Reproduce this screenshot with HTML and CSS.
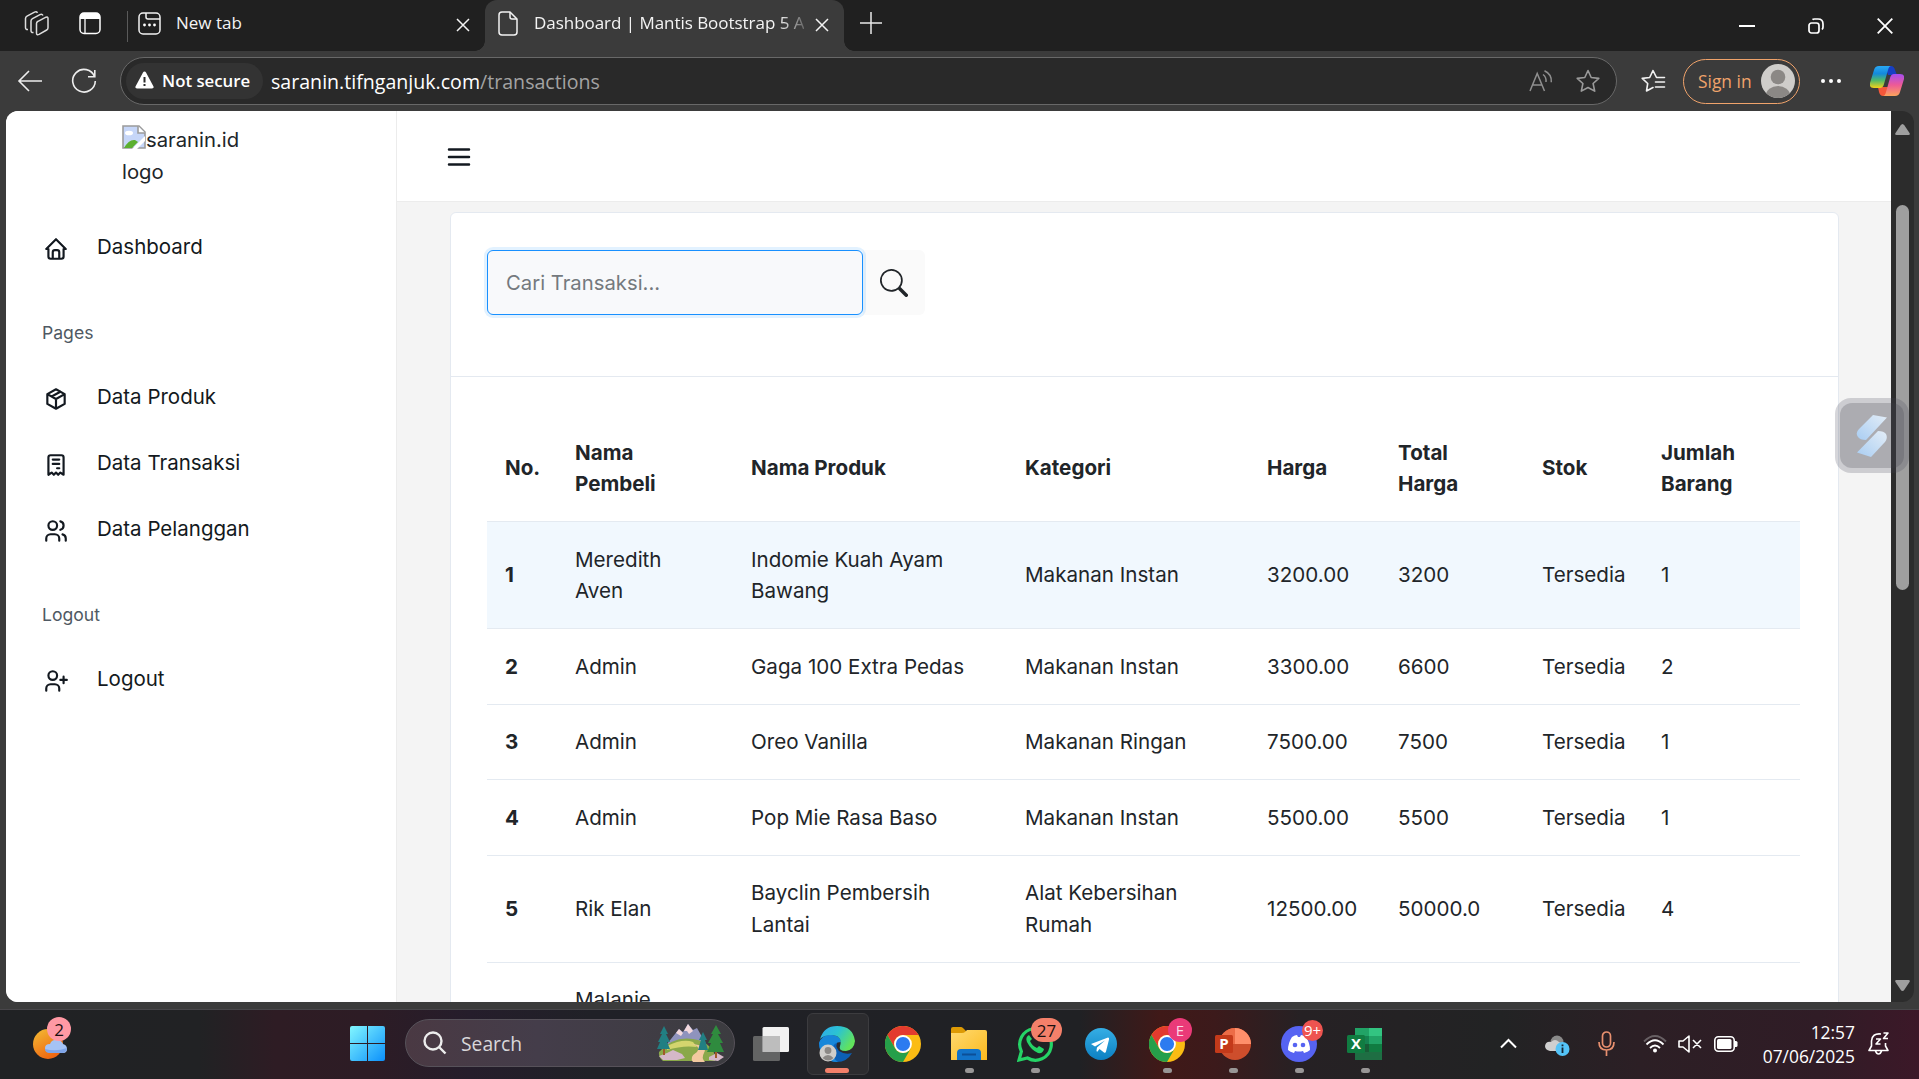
FILE: index.html
```
<!DOCTYPE html>
<html lang="id">
<head>
<meta charset="utf-8">
<title>Dashboard | Mantis Bootstrap 5</title>
<link rel="stylesheet" href="styles.css">
</head>
<body>
<svg width="0" height="0" class="defs" aria-hidden="true">
  <defs>
    <symbol id="chrome" viewBox="0 0 36 36">
      <circle cx="18" cy="18" r="18" fill="#fbbc13"/>
      <path d="M2.4 9A18 18 0 0 1 33.6 9H18a9 9 0 0 0-7.8 13.5z" fill="#e33b2e"/>
      <path d="M2.4 9A18 18 0 0 0 18 36l7.8-13.5a9 9 0 0 1-15.6 0z" fill="#269f4a"/>
      <circle cx="18" cy="18" r="8.9" fill="#fff"/>
      <circle cx="18" cy="18" r="7.1" fill="#2c7bf0"/>
    </symbol>
    <symbol id="close" viewBox="0 0 14 14"><path d="M1 1l12 12M13 1L1 13" fill="none" stroke="currentColor" stroke-width="1.5"/></symbol>
  </defs>
</svg>
<div class="screen">
  <header class="tabs">
    <div class="tabs-tools">
      <svg width="26" height="26" viewBox="0 0 26 26" fill="none" stroke="#ddd" stroke-width="1.5" stroke-linejoin="round"><path d="M12.500 12.500q0-1.500 1.500-2.200l8-4.100q2-.9 2 1.200v9.400q0 1.500-1.300 2.200l-7.700 4.400q-2.500 1.200-2.500-1.400z"/><path d="M9.500 21.500q-2.500.5-2.500-2V10q0-1.500 1.500-2.300l7.500-4q2-1 3 .8"/><path d="M4 18.500q-2.500.3-2.500-2V7.500Q1.500 6 3 5.200l7.500-4q2-1 3 .6"/></svg>
      <svg width="22" height="23" viewBox="0 0 22 23"><rect x="1" y="1" width="20" height="20.500" rx="4" fill="none" stroke="#fff" stroke-width="1.500"/><path d="M1 7V5q0-4 4-4h12q4 0 4 4v2z" fill="#fff"/><path d="M6 7v14" stroke="#fff" stroke-width="1.300"/></svg>
    </div>
    <div class="tab">
      <svg width="23" height="23" viewBox="0 0 23 23" fill="none" stroke="#f2f2f2" stroke-width="1.500"><rect x="1" y="1" width="21" height="21" rx="4"/><path d="M8 1v4q0 2 2 2h12"/><g fill="#fff" stroke="none"><circle cx="6.500" cy="13" r="1.400"/><circle cx="11.500" cy="13" r="1.400"/><circle cx="16.500" cy="13" r="1.400"/></g></svg>
      <span class="tab-title">New tab</span>
      <svg class="tab-close" width="14" height="14"><use href="#close"/></svg>
    </div>
    <div class="tab tab-active">
      <svg width="20" height="25" viewBox="0 0 20 25" fill="none" stroke="#f2f2f2" stroke-width="1.500" stroke-linejoin="round"><path d="M4 1h8l7 7v13q0 3-3 3H4q-3 0-3-3V4q0-3 3-3z"/><path d="M12 1v5q0 2 2 2h5"/></svg>
      <span class="tab-title fade">Dashboard | Mantis Bootstrap 5 A</span>
      <svg class="tab-close" width="14" height="14"><use href="#close"/></svg>
    </div>
    <svg class="new-tab" width="22" height="22" viewBox="0 0 22 22"><path d="M11 0v22M0 11h22" stroke="#e8e8e8" stroke-width="1.500"/></svg>
    <div class="window-buttons">
      <svg width="16" height="16" viewBox="0 0 16 16"><path d="M0 8h16" stroke="#fff" stroke-width="2"/></svg>
      <svg width="16" height="16" viewBox="0 0 16 16" fill="none" stroke="#fff" stroke-width="1.700"><rect x="1" y="5" width="10" height="10" rx="2.500"/><path d="M4.500 1.600Q5 1 6.500 1H10q5 0 5 5v3q0 1.500-1 2.500"/></svg>
      <svg width="16" height="16" viewBox="0 0 16 16"><path d="M.7.7l14.600 14.600M15.300.7L.7 15.300" stroke="#fff" stroke-width="1.800"/></svg>
    </div>
  </header>

  <div class="toolbar">
    <svg class="nav-icon" width="26" height="22" viewBox="0 0 26 22" fill="none" stroke="#ededed" stroke-width="1.600"><path d="M25 11H2M12 1L2 11l10 10"/></svg>
    <svg class="nav-icon" width="26" height="26" viewBox="0 0 26 26" fill="none" stroke="#ededed" stroke-width="1.600"><path d="M23.500 8.500A11.300 11.300 0 1 0 24.300 13M23.800 2v6.700H17"/></svg>
    <div class="address">
      <span class="chip"><svg width="19" height="18" viewBox="0 0 19 18"><path d="M9.500.5q1 0 1.500 1l7.500 14q.7 2-1.500 2H2q-2.200 0-1.500-2L8 1.500q.5-1 1.500-1z" fill="#fff"/><path d="M9.500 6v5.500M9.500 13v2" stroke="#2b2b2b" stroke-width="2"/></svg>Not secure</span>
      <span class="url">saranin.tifnganjuk.com<span class="path">/transactions</span></span>
      <svg class="read" width="24" height="22" viewBox="0 0 24 22" fill="none" stroke="#8f8f8f" stroke-width="1.500"><path d="M1 21L8.200 3.500 15.500 21M3.500 15H13"/><path d="M14 4.500q3.500 2.500 3 7.500M15.500 .8q7.500 3.500 6.800 11.500"/></svg>
      <svg width="24" height="24" viewBox="0 0 24 24" fill="none" stroke="#9a9a9a" stroke-width="1.600" stroke-linejoin="round"><path d="M12 1.500l3.200 7 7.600.9-5.700 5.100 1.600 7.600L12 18.500l-6.700 3.600 1.600-7.600L1.200 9.400l7.600-.9z"/></svg>
    </div>
    <svg class="fav" width="25" height="24" viewBox="0 0 25 24" fill="none" stroke="#f2f2f2" stroke-width="1.600" stroke-linejoin="round" stroke-linecap="round"><path d="M23.500 8.500h-8L12 1.500l-3.300 7-7.500.9 5.500 5.100L5.500 22l6.500-3.500M14.500 13h9M14.500 18h9"/></svg>
    <div class="signin">Sign in<svg width="34" height="34" viewBox="0 0 34 34"><clipPath id="av"><circle cx="17" cy="17" r="17"/></clipPath><circle cx="17" cy="17" r="17" fill="#cfcdca"/><g clip-path="url(#av)" fill="#8b8885"><circle cx="17" cy="13" r="7.300"/><ellipse cx="17" cy="31" rx="12" ry="9"/></g></svg></div>
    <svg class="dots" width="22" height="6" viewBox="0 0 22 6" fill="#fff"><circle cx="3" cy="3" r="2"/><circle cx="11" cy="3" r="2"/><circle cx="19" cy="3" r="2"/></svg>
    <svg width="34" height="32" viewBox="0 0 34 32">
      <defs>
        <linearGradient id="cp1" x1="0" y1="0" x2="0" y2="1"><stop offset="0" stop-color="#2aa9f5"/><stop offset=".35" stop-color="#1389dc"/><stop offset=".65" stop-color="#4fb96a"/><stop offset="1" stop-color="#f4d218"/></linearGradient>
        <linearGradient id="cp2" x1="0" y1="0" x2="0" y2="1"><stop offset="0" stop-color="#a64df0"/><stop offset=".5" stop-color="#ee5a96"/><stop offset="1" stop-color="#fba45c"/></linearGradient>
      </defs>
      <path d="M15 1h6q3 0 4 4l2 5h-9z" fill="#173fc4"/>
      <path d="M19 31h-6q-3 0-4-4l-1-5h10z" fill="#f4573a"/>
      <path d="M9 1h12q-2 0-3 4l-4 14q-1 4-4 4H4q-5 0-4-5L4 5q1-4 5-4z" fill="url(#cp1)"/>
      <path d="M25 31H13q2 0 3-4l4-14q1-4 4-4h6q5 0 4 5l-4 13q-1 4-5 4z" fill="url(#cp2)"/>
    </svg>
  </div>

  <div class="viewport">
    <div class="page">
      <nav class="sidebar">
        <div class="logo"><svg width="24" height="24" viewBox="0 0 24 24"><path d="M1 1h16l6 6v16H1z" fill="#c6d6f8" stroke="#9b9b9b" stroke-width="1.600"/><ellipse cx="7" cy="8" rx="4" ry="2.300" fill="#fff"/><path d="M2 23q5-9 11-8l3 2-6 6z" fill="#5cb030"/><path d="M10 24L23 11v5l-8 8z" fill="#fff"/><path d="M16 1v7h7" fill="#fff" stroke="#9b9b9b" stroke-width="1.600"/></svg>saranin.id logo</div>
        <a class="item"><svg class="icon" viewBox="0 0 24 24"><path d="M5 12H3l9-9 9 9h-2M5 12v7a2 2 0 0 0 2 2h10a2 2 0 0 0 2-2v-7M9 21v-6a2 2 0 0 1 2-2h2a2 2 0 0 1 2 2v6"/></svg>Dashboard</a>
        <div class="caption">Pages</div>
        <a class="item"><svg class="icon" viewBox="0 0 24 24"><path d="M12 3l8 4.500v9L12 21l-8-4.500v-9zM12 12l8-4.500M12 12v9M12 12L4 7.500M16 5.250l-8 4.500"/></svg>Data Produk</a>
        <a class="item"><svg class="icon" viewBox="0 0 24 24"><path d="M5 21V5a2 2 0 0 1 2-2h10a2 2 0 0 1 2 2v16l-3-2-2 2-2-2-2 2-2-2-3 2M9 7h6M9 11h6M13 15h2"/></svg>Data Transaksi</a>
        <a class="item"><svg class="icon" viewBox="0 0 24 24"><circle cx="9" cy="7" r="4"/><path d="M3 21v-2a4 4 0 0 1 4-4h4a4 4 0 0 1 4 4v2M16 3.130a4 4 0 0 1 0 7.750M21 21v-2a4 4 0 0 0-3-3.850"/></svg>Data Pelanggan</a>
        <div class="caption">Logout</div>
        <a class="item"><svg class="icon" viewBox="0 0 24 24"><circle cx="9" cy="7" r="4"/><path d="M3 21v-2a4 4 0 0 1 4-4h4a4 4 0 0 1 4 4v2M16 11h6M19 8v6"/></svg>Logout</a>
      </nav>
      <main class="main">
        <div class="topbar"><svg width="24" height="20" viewBox="0 0 24 20"><path d="M2 2.500h20M2 10h20M2 17.500h20" stroke="#131920" stroke-width="2.500" stroke-linecap="round"/></svg></div>
        <section class="card">
          <div class="card-head">
            <div class="search-input">Cari Transaksi...</div>
            <button class="search-btn"><svg width="28" height="28" viewBox="0 0 16 16" fill="#212529"><path d="M11.742 10.344a6.500 6.500 0 1 0-1.397 1.398h-.001c.03.04.062.078.098.115l3.850 3.850a1 1 0 0 0 1.415-1.414l-3.850-3.850a1.007 1.007 0 0 0-.115-.1zM12 6.500a5.500 5.500 0 1 1-11 0 5.500 5.500 0 0 1 11 0z"/></svg></button>
          </div>
          <table class="table">
            <colgroup><col class="c1"><col class="c2"><col class="c3"><col class="c4"><col class="c5"><col class="c6"><col class="c7"><col class="c8"></colgroup>
            <thead><tr><th>No.</th><th>Nama<br>Pembeli</th><th>Nama Produk</th><th>Kategori</th><th>Harga</th><th>Total<br>Harga</th><th>Stok</th><th>Jumlah<br>Barang</th></tr></thead>
            <tbody>
              <tr class="hover"><th>1</th><td>Meredith<br>Aven</td><td>Indomie Kuah Ayam<br>Bawang</td><td>Makanan Instan</td><td>3200.00</td><td>3200</td><td>Tersedia</td><td>1</td></tr>
              <tr><th>2</th><td>Admin</td><td>Gaga 100 Extra Pedas</td><td>Makanan Instan</td><td>3300.00</td><td>6600</td><td>Tersedia</td><td>2</td></tr>
              <tr><th>3</th><td>Admin</td><td>Oreo Vanilla</td><td>Makanan Ringan</td><td>7500.00</td><td>7500</td><td>Tersedia</td><td>1</td></tr>
              <tr><th>4</th><td>Admin</td><td>Pop Mie Rasa Baso</td><td>Makanan Instan</td><td>5500.00</td><td>5500</td><td>Tersedia</td><td>1</td></tr>
              <tr><th>5</th><td>Rik Elan</td><td>Bayclin Pembersih<br>Lantai</td><td>Alat Kebersihan<br>Rumah</td><td>12500.00</td><td>50000.0</td><td>Tersedia</td><td>4</td></tr>
              <tr><th></th><td>Malanie</td><td></td><td></td><td></td><td></td><td></td><td></td></tr>
            </tbody>
          </table>
        </section>
      </main>
    </div>
    <div class="scrollbar">
      <svg width="15" height="12" viewBox="0 0 15 12"><path d="M7.500 0q1 0 2 1.500l5 7.500q1 2-1 2h-12q-2 0-1-2l5-7.500Q6.500 0 7.500 0z" fill="#9f9f9f"/></svg>
      <div class="thumb"></div>
      <svg class="down" width="15" height="12" viewBox="0 0 15 12"><path d="M7.500 12q-1 0-2-1.500L.5 3q-1-2 1-2h12q2 0 1 2l-5 7.500q-1 1.500-2 1.500z" fill="#9f9f9f"/></svg>
    </div>
  </div>
  <div class="widget"><div class="widget-in"><svg width="32" height="42" viewBox="0 0 32 42"><defs><linearGradient id="wg" x1="1" y1="0" x2="0" y2="1"><stop offset="0" stop-color="#e3edf7"/><stop offset="1" stop-color="#a9cdf2"/></linearGradient></defs><path d="M17 0l14 2.500L10 25Q4 25 2 22q-3-4 1-8z" fill="url(#wg)"/><path d="M15 42L1 37.500 22 16q6 0 8 3 2 4-1 8z" fill="url(#wg)"/></svg></div></div>

  <footer class="taskbar">
    <div class="weather"><svg width="36" height="32" viewBox="0 0 36 32"><defs><linearGradient id="sun" x1="0" y1="0" x2=".6" y2="1"><stop offset="0" stop-color="#f3bd35"/><stop offset="1" stop-color="#ee6410"/></linearGradient></defs><circle cx="15" cy="16" r="15" fill="url(#sun)"/><path d="M17 25q-5-1-5-5t5-4q2-5 8-4 4 1 5 4 4 1 4 5t-4 4z" fill="#a5c3f5"/><path d="M12 21q0 4 5 4h13q4-1 4-5-11 4-22 1z" fill="#7fa5e8"/></svg><span class="badge b-weather">2</span></div>
    <div class="apps">
      <div class="app"><svg width="35" height="35" viewBox="0 0 35 35"><defs><linearGradient id="win" gradientUnits="userSpaceOnUse" x1="0" y1="0" x2="35" y2="35"><stop offset="0" stop-color="#82f7ff"/><stop offset="1" stop-color="#0c90fb"/></linearGradient></defs><path d="M2 0h15v17H0V2q0-2 2-2zM18 0h15q2 0 2 2v15H18zM0 18h17v17H2q-2 0-2-2zM18 18h17v15q0 2-2 2H18z" fill="url(#win)"/></svg></div>
      <div class="search"><svg width="24" height="24" viewBox="0 0 24 24" fill="none" stroke="#ededed" stroke-width="2.400"><circle cx="10" cy="10" r="8.500"/><path d="M16 16l6.500 6.500"/></svg><span>Search</span>
        <svg class="scene" width="68" height="38" viewBox="0 0 68 38"><path d="M10 20L22 5l4 3 5-8 5 6 4-2 9 16z" fill="#8f93bd"/><path d="M19 9l3-4 4 4-2 3zM27 7l4-7 5 7-4 3-2-3z" fill="#f3d8dc"/><path d="M2 28q14-16 34-13 16 2 22 16v6H6q-5-4-4-9z" fill="#8aa84a"/><path d="M10 22q16-8 26-4l4 5q-14-2-30 3z" fill="#d4d56e"/><path d="M29 20q16 0 11 8-8 5-4 10h12q-4-4-1-9 5-9-18-9z" fill="#f3c9a0"/><path d="M2 32l8-3 6-3 9 4 3 4-8 2-14 0z" fill="#d5b8c8"/><path d="M52 33l8-4 7 4-6 4-9-1z" fill="#d5b8c8"/><path d="M7 2l-4 8h2l-4 8h2l-3 7h13l-3-7h3l-4-8h2zM46 8l-4 8h2l-3 10h10l-3-10h2z" fill="#217f83"/><path d="M59 1l-5 9h2l-5 9h3l-4 9h17l-4-9h3l-5-9h3z" fill="#2f8b3e"/><path d="M7 25v6M59 28v6" stroke="#a15a2a" stroke-width="2"/></svg>
      </div>
      <div class="app"><svg width="36" height="34" viewBox="0 0 36 34"><rect x="9.500" width="26.500" height="25" rx="1.500" fill="#f1f1f1"/><rect y="9" width="27" height="25" rx="1.500" fill="#707070" opacity=".85"/><path d="M9.500 9H27v16H9.500z" fill="#bdbdbd"/></svg></div>
      <div class="app current"><svg width="36" height="36" viewBox="0 0 36 36"><defs><linearGradient id="ed" x1="0" y1="0" x2="1" y2=".5"><stop offset="0" stop-color="#2fa8ef"/><stop offset=".5" stop-color="#2bc3d2"/><stop offset="1" stop-color="#62e35c"/></linearGradient></defs><path d="M0 17Q4 8 13 9l7 4q-5 7 0 12 6 4 13 2-5 9-15 9Q1 35 0 17z" fill="#0c5fb5"/><path d="M0 17Q3 8 13 9q9 1 9 7-8 0-9 8 0 8 6 12Q1 36 0 17z" fill="#1787da"/><path d="M1 13Q5 0 18 0q16 0 18 15-1 9-9 10-8 0-6-5 3-10-8-11Q5 9 1 13z" fill="url(#ed)"/><circle cx="9" cy="27" r="8.500" fill="#cfcdca"/><circle cx="9" cy="24.500" r="3.400" fill="#8b8885"/><path d="M3.500 32q5.500-6 11 0-5 5-11 0z" fill="#8b8885"/></svg><i class="dot wide"></i></div>
      <div class="app"><svg width="36" height="36"><use href="#chrome"/></svg></div>
      <div class="app"><svg width="36" height="33" viewBox="0 0 36 33"><defs><linearGradient id="fo" x1="0" y1="0" x2="1" y2="1"><stop offset="0" stop-color="#ffda70"/><stop offset="1" stop-color="#fbb91d"/></linearGradient></defs><path d="M0 2q0-2 2-2h8q1 0 2 1l3 3v4H0z" fill="#dd9a04"/><path d="M0 6h11q2 0 3-1l2-2h18q2 0 2 2v28H0z" fill="url(#fo)"/><path d="M6 33v-7q0-4 4-4h16q4 0 4 4v7z" fill="#1273c9"/><path d="M11 27.500h14" stroke="#0c4f96" stroke-width="2"/></svg><i class="dot"></i></div>
      <div class="app"><svg width="36" height="36" viewBox="0 0 36 36"><path d="M2 34l2.400-8.500A15.800 15.800 0 1 1 10.500 32z" fill="none" stroke="#25d366" stroke-width="3.200"/><path d="M12 9q-4 2-2 7 4 8 11 11 5 1 6-4l-5-3-2 2q-5-2-7-7l2-2z" fill="#25d366"/></svg><i class="dot"></i><span class="badge b-wa">27</span></div>
      <div class="app"><svg width="32" height="32" viewBox="0 0 32 32"><defs><linearGradient id="tg" x1="0" y1="0" x2="0" y2="1"><stop offset="0" stop-color="#35aee5"/><stop offset="1" stop-color="#0c80c2"/></linearGradient></defs><circle cx="16" cy="16" r="16" fill="url(#tg)"/><path d="M6 16l17-6.500q1.500 0 1 2l-3 12q-.5 2-2 1l-4.500-3.500-2 2.500q-1 .5-1-1l.500-3 8-7-10 6z" fill="#fff"/></svg></div>
      <div class="app"><svg width="36" height="36"><use href="#chrome"/></svg><i class="dot"></i><span class="badge b-e">E</span></div>
      <div class="app"><svg width="36" height="32" viewBox="0 0 36 32"><circle cx="20" cy="16" r="16" fill="#ce4e2c"/><path d="M4 16A16 16 0 0 1 20 0v16z" fill="#ec6c47"/><path d="M20 0a16 16 0 0 1 16 16H20z" fill="#ff8f6b"/><rect y="7" width="18" height="18" rx="1.500" fill="#c43a1a"/></svg><span class="letter">P</span><i class="dot"></i></div>
      <div class="app"><svg width="36" height="36" viewBox="0 0 36 36"><circle cx="18" cy="18" r="18" fill="#5663f2"/><path d="M7 24q0-7 4-13 3-2 5-2l1 2h2l1-2q2 0 5 2 4 6 4 13-2 2-6 3l-1-2q-4 1-8 0l-1 2q-4-1-6-3z" fill="#fff"/><circle cx="14" cy="19" r="2.300" fill="#5663f2"/><circle cx="22" cy="19" r="2.300" fill="#5663f2"/></svg><i class="dot"></i><span class="badge b-dc">9+</span></div>
      <div class="app"><svg width="36" height="32" viewBox="0 0 36 32"><path d="M8 0h27v32H8z" fill="#1e6e43"/><path d="M8 0h14v16H8z" fill="#21a366"/><path d="M22 0h13v8H22z" fill="#33c481"/><path d="M22 8h13v8H22z" fill="#21a366"/><path d="M8 8h14v8H8z" fill="#158250"/><path d="M22 16h13v8H22z" fill="#107c41"/><path d="M8 16h14v8H8z" fill="#185c37"/><rect y="7" width="18" height="18" rx="1.500" fill="#107c41"/></svg><span class="letter">X</span><i class="dot"></i></div>
    </div>
    <div class="tray">
      <svg width="17" height="11" viewBox="0 0 17 11"><path d="M1 9.500L8.500 2 16 9.500" fill="none" stroke="#fff" stroke-width="2"/></svg>
      <svg class="t-cloud" width="25" height="21" viewBox="0 0 25 21"><circle cx="12" cy="7" r="6.500" fill="#8a8a8a"/><path d="M5 16q-5-1-5-5 1-5 6-4 4-4 8 0l4 2v7z" fill="#cfcfcf"/><circle cx="17.500" cy="14" r="7" fill="#54c3f7"/><path d="M17.500 12.500V18M17.500 9.500v1.700" stroke="#152433" stroke-width="1.800"/></svg>
      <svg class="t-mic" width="17" height="25" viewBox="0 0 17 25" fill="none" stroke="#e8906f" stroke-width="1.700"><rect x="4.500" y="1" width="8" height="15" rx="4"/><path d="M1 11q0 8 7.500 8t7.500-8M8.500 19v6"/></svg>
      <svg class="t-wifi" width="24" height="18" viewBox="0 0 24 18" fill="none" stroke="#fff" stroke-width="1.800"><path d="M1 6.500q11-11 22 0" stroke="#686064"/><path d="M3.500 9.500q8.500-8.500 17 0M7 13q5-5 10 0"/><circle cx="12" cy="15.500" r="2" fill="#fff" stroke="none"/></svg>
      <svg class="t-vol" width="24" height="18" viewBox="0 0 24 18" fill="none" stroke="#fff" stroke-width="1.600" stroke-linejoin="round"><path d="M1 6h4l6-5v16l-6-5H1zM15 5l8 8M23 5l-8 8"/></svg>
      <svg class="t-bat" width="24" height="16" viewBox="0 0 24 16"><rect x=".8" y=".8" width="19.400" height="14.400" rx="3.500" fill="none" stroke="#fff" stroke-width="1.600"/><rect x="3" y="3" width="14.500" height="10" rx="1.500" fill="#fff"/><path d="M21 5h1q1.500 0 1.500 1.500v3q0 1.500-1.500 1.500h-1z" fill="#fff"/></svg>
      <div class="clock"><span>12:57</span><span>07/06/2025</span></div>
      <svg class="t-bell" width="22" height="23" viewBox="0 0 22 23" fill="none" stroke="#fff" stroke-width="1.600" stroke-linejoin="round"><path d="M13 2Q4 1 3.500 9v5L1 18.500h19L17.500 14v-3M7.500 19q1 3 3 3t3-3"/><path d="M8 7h4.500L8 12h4.500M15.500 1H20l-4.500 5.500H20"/></svg>
    </div>
  </footer>
</div>
</body>
</html>
```

FILE: styles.css
```
* { box-sizing: border-box; }
body { margin: 0; background: #3b3b3b; font-family: "Open Sans", sans-serif; }
svg { display: block; flex: none; }
.defs { position: absolute; }
.screen { position: relative; width: 1919px; height: 1079px; display: flex; flex-direction: column; overflow: hidden; }

/* Tab strip */
.tabs { height: 51px; background: #202020; display: flex; align-items: stretch; color: #f4f4f4; font-size: 17px; }
.tabs > svg { align-self: center; }
.tabs-tools { width: 127px; display: flex; align-items: center; gap: 29px; padding: 0 0 4px 24px; }
.tab { width: 358px; display: flex; align-items: center; padding: 0 15px 4px 10px; position: relative; }
.tab:not(.tab-active)::before { content: ""; align-self: center; width: 1px; height: 31px; margin: 5px 10px 0 -10px; background: #5a5a5a; }
.tab-title { margin: -2px 0 0 15px; white-space: nowrap; overflow: hidden; flex: 1; }
.tab-close { margin-left: 12px; margin-top: 3px; }
.tab-active { width: 359px; background: #3b3b3b; border-radius: 12px 12px 0 0; padding: 0 15px 4px 13px; }
.tab-active .tab-title { margin-left: 16px; letter-spacing: -.04px; }
.tab-active .tab-close { margin-left: 11px; }
.tab-active::before, .tab-active::after { content: ""; position: absolute; bottom: 0; width: 10px; height: 10px; }
.tab-active::before { left: -10px; background: radial-gradient(circle at 0 0, #202020 9.5px, #3b3b3b 10px); }
.tab-active::after { right: -10px; background: radial-gradient(circle at 100% 0, #202020 9.5px, #3b3b3b 10px); }
.fade { -webkit-mask-image: linear-gradient(90deg, #000 245px, transparent 278px); mask-image: linear-gradient(90deg, #000 245px, transparent 278px); }
.new-tab { margin: 0 0 5px 16px; }
.window-buttons { margin-left: auto; display: flex; align-items: center; gap: 53px; padding-right: 26px; }

/* Toolbar */
.toolbar { height: 60px; display: flex; align-items: center; padding: 0 15px 0 17px; }
.nav-icon { margin-right: 28px; }
.nav-icon + .nav-icon { margin-right: 23px; }
.address { flex: 1; height: 48px; border: 1px solid #686868; border-radius: 24px; background: #292929; display: flex; align-items: center; padding: 0 16px 0 5px; }
.chip { width: 137px; height: 36px; border-radius: 18px; background: #333; color: #fff; display: flex; align-items: center; gap: 8px; padding: 0 0 2px 9px; font-size: 16.8px; font-weight: 600; white-space: nowrap; }
.url { margin-left: 8px; flex: 1; color: #fff; font-size: 19.6px; }
.path { color: #a3a3a3; }
.read { margin-right: 23px; }
.fav { margin: 0 17px 0 24px; }
.signin { width: 117px; height: 45px; border: 1.5px solid #f0a36b; border-radius: 23px; color: #f0a36b; display: flex; align-items: center; justify-content: space-between; padding: 0 4px 0 14px; font-size: 17.4px; white-space: nowrap; }
.dots { margin: 0 28px 0 20px; }

/* Page */
.viewport { height: 891px; margin: 0 5px 0 6px; border-radius: 12px; overflow: hidden; display: flex; background: #2c2c2c; }
.page { width: 1885px; display: flex; background: #f4f4f4; font: 20.6px/31.5px Inter, sans-serif; color: #212529; overflow: hidden; }
.sidebar { width: 391px; flex: none; background: #fff; border-right: 1px solid #ececec; }
.logo { margin: 13px 0 26px 116px; height: 64px; width: 130px; font-size: 20.3px; }
.logo svg { display: inline-block; vertical-align: -2px; }
.item { height: 66px; display: flex; align-items: center; padding-left: 37px; gap: 28px; color: #131920; font-size: 20.5px; }
.icon { width: 26px; height: 26px; margin-top: 4px; fill: none; stroke: #131920; stroke-width: 2; stroke-linecap: round; stroke-linejoin: round; }
.caption { height: 84px; padding: 37px 0 0 36px; font-size: 17.6px; color: #4f5963; }
.main { flex: 1; }
.topbar { height: 91px; background: #fff; border-bottom: 1px solid #ececec; display: flex; align-items: center; padding: 1px 0 0 50px; }
.card { margin: 10px 52px 0 53px; height: 900px; background: #fff; border: 1px solid #e4e9f0; border-radius: 6px; }
.card-head { height: 164px; border-bottom: 1px solid #e4e9f0; display: flex; align-items: flex-start; padding: 37px 36px; }
.search-input { width: 376px; height: 65px; border: 1px solid #1890ff; border-radius: 6px; box-shadow: 0 0 0 3px rgba(24, 144, 255, .12); background: #f8f9fb; padding: 16px 18px; color: #74797e; font-size: 20.3px; z-index: 1; }
.search-btn { width: 62px; height: 65px; border: 0; border-radius: 0 6px 6px 0; background: #fafafa; display: flex; align-items: center; justify-content: center; padding: 0; }
.table { width: 1313px; margin: 38px 0 0 36px; table-layout: fixed; border-collapse: separate; border-spacing: 0; }
.table th, .table td { padding: 21.5px 0 21.5px 18px; border-bottom: 1px solid #e4eaf1; text-align: left; vertical-align: middle; white-space: nowrap; }
.table th { font-weight: 650; }
.hover { background: #f1f8fe; }
.c1 { width: 70px; } .c2 { width: 176px; } .c3 { width: 274px; } .c4 { width: 242px; }
.c5 { width: 131px; } .c6 { width: 144px; } .c7 { width: 119px; } .c8 { width: 157px; }

.scrollbar { flex: 1; display: flex; flex-direction: column; align-items: flex-start; padding: 13px 0 11px 4px; }
.thumb { width: 13px; height: 385px; margin: 69px 0 0 1px; border-radius: 7px; background: #9f9f9f; }
.down { margin-top: auto; }

.widget { position: absolute; left: 1835px; top: 398px; width: 74px; height: 75px; border-radius: 16px; background: rgba(70, 70, 85, .22); padding: 5px; }
.widget-in { height: 100%; border-radius: 12px; background: rgba(65, 65, 75, .23); display: flex; align-items: center; justify-content: center; }

/* Taskbar */
.taskbar { margin-top: 7px; height: 70px; border-top: 1px solid #48464a; display: flex; background: linear-gradient(90deg, #202224 0, #212224 200px, #2e1c24 275px, #2d1c25 370px, #251d2b 470px, #202127 590px, #202124 1080px, #401918 1160px, #3c1a1b 1215px, #262124 1300px, #222324 1500px, #2c1f25 1640px, #301c26 1820px, #3c1828 1919px); color: #fff; }
.weather { position: relative; width: 334px; padding: 18px 0 0 33px; }
.badge { position: absolute; display: flex; align-items: center; justify-content: center; border-radius: 12px; height: 24px; font-size: 17px; line-height: 1; color: #1a1010; }
.b-weather { left: 47px; top: 7px; width: 24px; background: #ff99a4; }
.b-wa { left: 29px; top: 8px; width: 31px; background: #f4806a; }
.b-e { left: 34px; top: 8px; width: 24px; background: #ea3a78; color: #fbd7e5; font-size: 15px; }
.b-dc { left: 36px; top: 10px; width: 21px; height: 21px; background: #ee5450; color: #fff; font-size: 15px; }
.apps { display: flex; }
.app { position: relative; width: 66px; height: 67px; display: flex; align-items: center; justify-content: center; }
.current::before { content: ""; position: absolute; left: 3px; top: 3px; width: 60px; height: 60px; border: 1px solid #3c3c3f; border-radius: 6px; background: #2c2c2f; }
.current svg { position: relative; }
.dot { position: absolute; left: 28.5px; bottom: 4px; width: 9px; height: 5px; border-radius: 3px; background: #989696; }
.dot.wide { left: 21px; width: 24px; background: #f4806a; }
.letter { position: absolute; left: 15px; top: 24px; width: 18px; text-align: center; font-size: 15px; line-height: 18px; font-weight: 700; }
.search { width: 330px; height: 48px; margin: 9px 3px 0 5px; border: 1px solid #57525a; border-radius: 24px; background: linear-gradient(90deg, #4a3943, #443d4a 40%, #3c3c40); display: flex; align-items: center; padding: 0 9px 0 17px; font-size: 19.3px; color: #d9d7da; }
.search span { margin-left: 14px; }
.scene { margin-left: auto; }
.tray { margin-left: auto; display: flex; align-items: center; padding: 0 29px 2px 0; }
.t-cloud { margin-left: 28px; margin-top: 3px; }
.t-mic { margin-left: 28px; }
.t-wifi { margin-left: 28px; }
.t-vol { margin-left: 11px; }
.t-bat { margin-left: 12px; }
.clock { width: 117px; display: flex; flex-direction: column; align-items: flex-end; font-size: 17.4px; line-height: 24px; }
.t-bell { margin-left: 13px; }
```
